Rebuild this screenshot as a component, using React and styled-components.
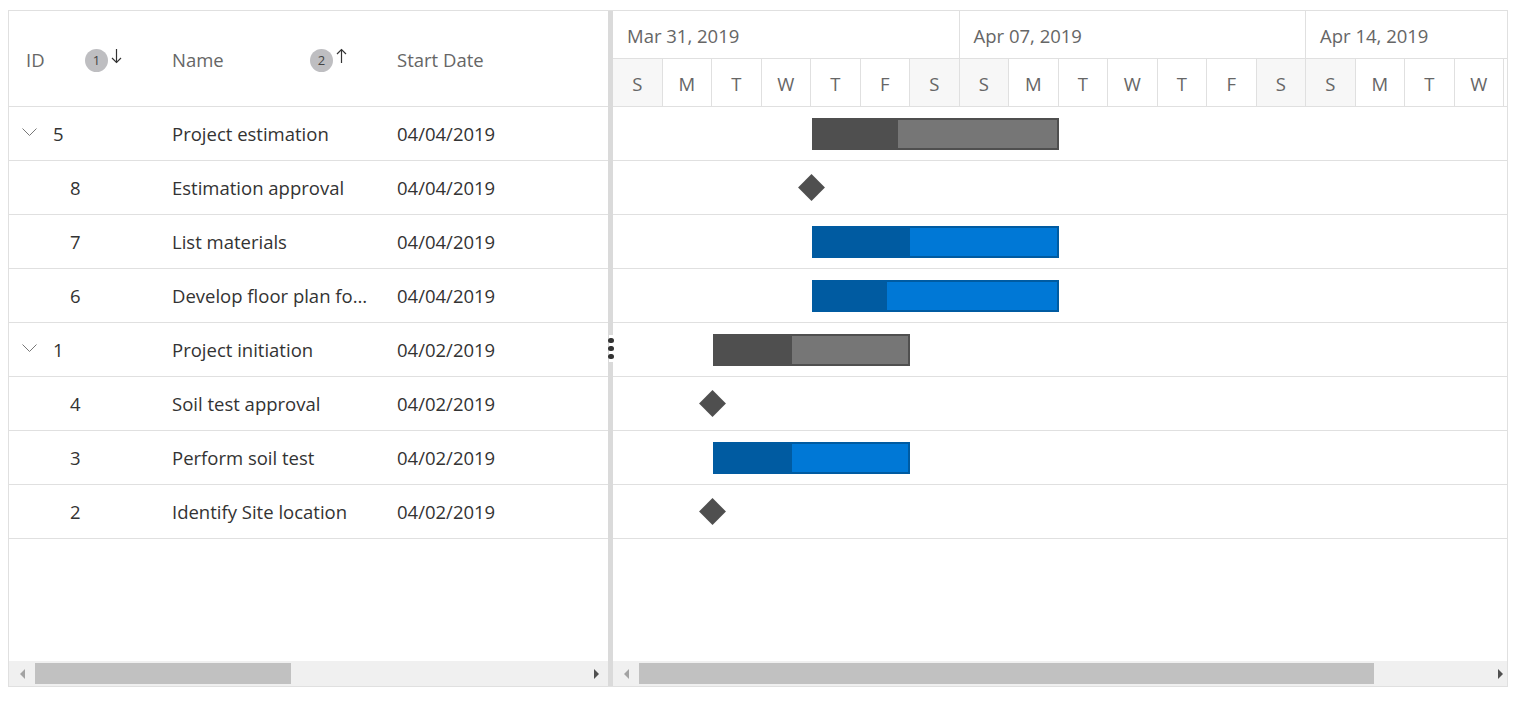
import styled, { createGlobalStyle } from 'styled-components'

const DAY = 49.5;
const FONT = `"Open Sans", "Noto Sans", sans-serif`;

const tasks = [
    { id: 5, name: 'Project estimation', start: '04/04/2019', parent: true, d: 4, len: 5, progress: 0.356 },
    { id: 8, name: 'Estimation approval', start: '04/04/2019', milestone: true, d: 4 },
    { id: 7, name: 'List materials', start: '04/04/2019', d: 4, len: 5, progress: 0.405 },
    { id: 6, name: 'Develop floor plan for estimation', start: '04/04/2019', d: 4, len: 5, progress: 0.31 },
    { id: 1, name: 'Project initiation', start: '04/02/2019', parent: true, d: 2, len: 4, progress: 0.41 },
    { id: 4, name: 'Soil test approval', start: '04/02/2019', milestone: true, d: 2 },
    { id: 3, name: 'Perform soil test', start: '04/02/2019', d: 2, len: 4, progress: 0.41 },
    { id: 2, name: 'Identify Site location', start: '04/02/2019', milestone: true, d: 2 },
];

const weeks = ['Mar 31, 2019', 'Apr 07, 2019', 'Apr 14, 2019'];
const days = ['S', 'M', 'T', 'W', 'T', 'F', 'S'];

export default function App() {
    return (
        <>
            <Global />
            <Gantt>
                <GridPane>
                    <GridHeader>
                        <HeadCell $w={146}>
                            ID
                            <SortMark num={1} dir="down" />
                        </HeadCell>
                        <HeadCell $w={225}>
                            Name
                            <SortMark num={2} dir="up" />
                        </HeadCell>
                        <HeadCell $w={228}>Start Date</HeadCell>
                    </GridHeader>
                    {tasks.map((t) => (
                        <GridRow key={t.id}>
                            <IdCell $child={!t.parent}>
                                {t.parent && <Chevron />}
                                {t.id}
                            </IdCell>
                            <NameCell>{t.name}</NameCell>
                            <DateCell>{t.start}</DateCell>
                        </GridRow>
                    ))}
                    <Filler />
                    <ScrollBar $lead={26} $thumb={256} $trail={24} />
                </GridPane>

                <Splitter>
                    <Handle>
                        <i /><i /><i />
                    </Handle>
                </Splitter>

                <ChartPane>
                    <Timeline>
                        <TopTier>
                            {weeks.map((w) => (
                                <WeekCell key={w}>{w}</WeekCell>
                            ))}
                        </TopTier>
                        <BottomTier>
                            {weeks.flatMap((w) =>
                                days.map((d, i) => (
                                    <DayCell key={w + i} $weekend={i === 0 || i === 6}>{d}</DayCell>
                                ))
                            )}
                        </BottomTier>
                    </Timeline>
                    {tasks.map((t) => (
                        <ChartRow key={t.id}>
                            {t.milestone ? (
                                <Milestone style={{ left: t.d * DAY - 9.5 }} />
                            ) : (
                                <Bar
                                    $parent={t.parent}
                                    style={{ left: t.d * DAY + 1, width: t.len * DAY - 1 }}
                                >
                                    <Progress $parent={t.parent} style={{ width: `${t.progress * 100}%` }} />
                                </Bar>
                            )}
                        </ChartRow>
                    ))}
                    <Filler />
                    <ScrollBar $lead={26} $thumb={735} $trail={13} />
                </ChartPane>
            </Gantt>
        </>
    )
}

function SortMark({ num, dir }) {
    return (
        <Sort>
            <Badge>{num}</Badge>
            <svg width="11" height="16" viewBox="0 0 11 16" fill="none" stroke="#333" strokeWidth="1.2">
                {dir === 'down' ? (
                    <>
                        <path d="M5.5 1v13.5" />
                        <path d="M1 10l4.5 4.5L10 10" />
                    </>
                ) : (
                    <>
                        <path d="M5.5 1.5V15" />
                        <path d="M1 6l4.5-4.5L10 6" />
                    </>
                )}
            </svg>
        </Sort>
    )
}

function Chevron() {
    return (
        <ChevronBox width="15" height="8" viewBox="0 0 15 8" fill="none" stroke="#777" strokeWidth="1">
            <path d="M0.5 0.5l7 7 7-7" />
        </ChevronBox>
    )
}

function ScrollBar({ $lead, $thumb, $trail }) {
    return (
        <Scroll>
            <ArrowBtn $w={$lead}>
                <Tri $dir="left" />
            </ArrowBtn>
            <Track>
                <Thumb style={{ width: $thumb }} />
            </Track>
            <ArrowBtn $w={$trail}>
                <Tri $dir="right" />
            </ArrowBtn>
        </Scroll>
    )
}

//style

const Global = createGlobalStyle`
body{
    margin:0;
    background:#fff;
    font-family:${FONT};
}
#root{
    padding:10px 0 0 8px;
}
`;

const Gantt = styled.div`
display:flex;
width:1500px;
height:677px;
box-sizing:border-box;
border:1px solid #e0e0e0;
overflow:hidden;
`;

const GridPane = styled.div`
width:599px;
flex-shrink:0;
display:flex;
flex-direction:column;
overflow:hidden;
`;

const GridHeader = styled.div`
display:flex;
height:95px;
border-bottom:1px solid #e0e0e0;
flex-shrink:0;
`;

const HeadCell = styled.div`
width:${p => p.$w}px;
flex-shrink:0;
box-sizing:border-box;
display:flex;
align-items:center;
padding:1px 33px 0 17px;
font-size:18.5px;
color:#666;
`;

const Sort = styled.div`
margin-left:auto;
display:flex;
align-items:center;
gap:3px;
svg{
    margin-top:-6px;
}
`;

const Badge = styled.span`
width:23px;
height:23px;
border-radius:50%;
background:#bebec1;
color:#444;
font-size:13px;
display:flex;
align-items:center;
justify-content:center;
margin-top:2px;
`;

const GridRow = styled.div`
display:flex;
height:53px;
border-bottom:1px solid #e0e0e0;
flex-shrink:0;
align-items:center;
font-size:18.5px;
color:#333;
`;

const IdCell = styled.div`
width:146px;
flex-shrink:0;
box-sizing:border-box;
display:flex;
align-items:center;
padding-left:${p => (p.$child ? 61 : 13)}px;
`;

const ChevronBox = styled.svg`
margin-right:16px;
margin-top:-4px;
`;

const NameCell = styled.div`
width:225px;
flex-shrink:0;
box-sizing:border-box;
padding:0 10px 0 17px;
white-space:nowrap;
overflow:hidden;
text-overflow:ellipsis;
`;

const DateCell = styled.div`
width:228px;
flex-shrink:0;
box-sizing:border-box;
padding-left:17px;
`;

const Filler = styled.div`
flex:1;
`;

const Scroll = styled.div`
height:25px;
flex-shrink:0;
background:#f0f0f0;
display:flex;
align-items:center;
`;

const ArrowBtn = styled.div`
width:${p => p.$w}px;
height:100%;
flex-shrink:0;
display:flex;
align-items:center;
justify-content:center;
`;

const Tri = styled.span`
width:0;
height:0;
border-top:5px solid transparent;
border-bottom:5px solid transparent;
${p => p.$dir === 'left'
        ? 'border-right:5px solid #a3a3a3;'
        : 'border-left:5px solid #505050;'}
`;

const Track = styled.div`
flex:1;
height:21px;
`;

const Thumb = styled.div`
height:100%;
background:#c1c1c1;
`;

const Splitter = styled.div`
width:5px;
flex-shrink:0;
background:#dadada;
display:flex;
flex-direction:column;
justify-content:center;
align-items:center;
`;

const Handle = styled.div`
width:5px;
height:27px;
background:#fff;
display:flex;
flex-direction:column;
align-items:center;
justify-content:center;
gap:2.5px;
margin-left:1px;
i{
    display:block;
    width:5.5px;
    height:5.5px;
    border-radius:50%;
    background:#333;
}
`;

const ChartPane = styled.div`
flex:1;
min-width:0;
display:flex;
flex-direction:column;
overflow:hidden;
`;

const Timeline = styled.div`
border-bottom:1px solid #e0e0e0;
flex-shrink:0;
color:#666;
font-size:18.5px;
`;

const TopTier = styled.div`
display:flex;
height:47px;
border-bottom:1px solid #e0e0e0;
`;

const WeekCell = styled.div`
width:${DAY * 7}px;
flex-shrink:0;
box-sizing:border-box;
border-right:1px solid #e0e0e0;
padding:1px 0 0 14px;
display:flex;
align-items:center;
`;

const BottomTier = styled.div`
display:flex;
height:47px;
`;

const DayCell = styled.div`
width:${DAY}px;
flex-shrink:0;
box-sizing:border-box;
border-right:1px solid #e0e0e0;
background:${p => (p.$weekend ? '#f7f7f7' : '#fff')};
display:flex;
align-items:center;
justify-content:center;
padding-top:1px;
`;

const ChartRow = styled.div`
position:relative;
height:53px;
border-bottom:1px solid #e0e0e0;
flex-shrink:0;
`;

const Bar = styled.div`
position:absolute;
top:11px;
height:32px;
box-sizing:border-box;
border:2px solid ${p => (p.$parent ? '#4f4f4f' : '#005ba1')};
background:${p => (p.$parent ? '#767676' : '#0078d6')};
`;

const Progress = styled.div`
height:100%;
margin:-2px 0 0 -2px;
padding-bottom:4px;
background:${p => (p.$parent ? '#4f4f4f' : '#005ba1')};
`;

const Milestone = styled.div`
position:absolute;
top:17px;
width:19px;
height:19px;
background:#4f4f4f;
transform:rotate(45deg);
`;
